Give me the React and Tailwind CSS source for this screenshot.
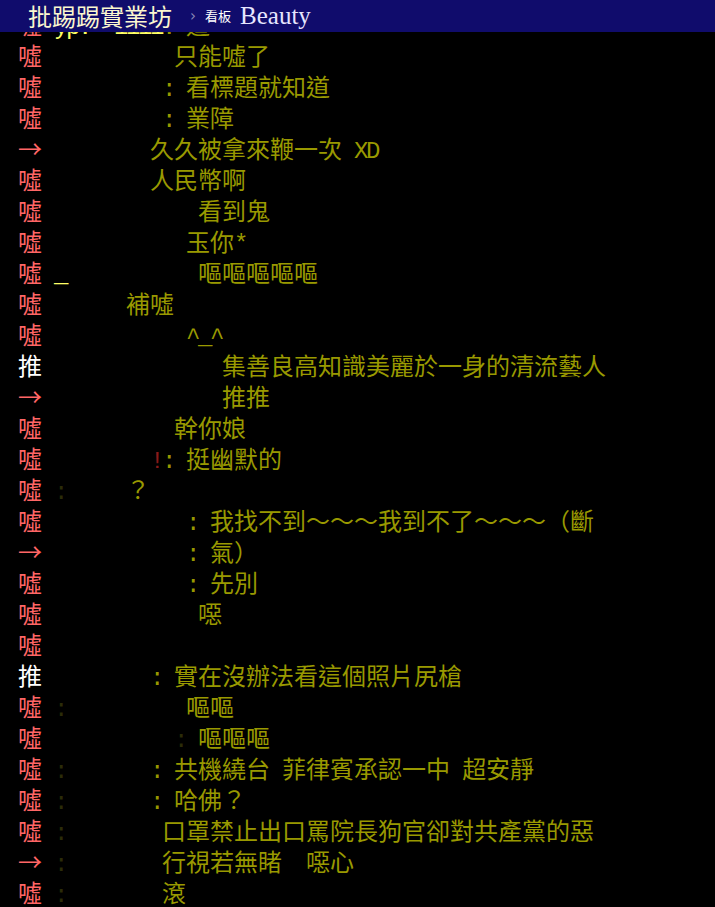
import React from "react";

const TAGS = {
  boo: { ch: "噓", cls: "text-[#ff6666]" },
  arrow: { ch: "→", cls: "text-[#ff6666]" },
  push: { ch: "推", cls: "text-white" },
};

const Y = "text-[#999900]";
const HI = "text-[#ffff66]";
const DIM = "text-[#2c2c08]";
const RED = "text-[#8a1a1a]";

const rows = [
  { tag: "boo", segs: [[4, "yp.", HI], [9, "1111", HI], [13, ":", Y], [15, "這", Y]] },
  { tag: "boo", segs: [[14, "只能噓了", Y]] },
  { tag: "boo", segs: [[13, ": 看標題就知道", Y]] },
  { tag: "boo", segs: [[13, ": 業障", Y]] },
  { tag: "arrow", segs: [[12, "久久被拿來鞭一次 XD", Y]] },
  { tag: "boo", segs: [[12, "人民幣啊", Y]] },
  { tag: "boo", segs: [[16, "看到鬼", Y]] },
  { tag: "boo", segs: [[15, "玉你*", Y]] },
  { tag: "boo", segs: [[4, "_", HI], [16, "嘔嘔嘔嘔嘔", Y]] },
  { tag: "boo", segs: [[10, "補噓", Y]] },
  { tag: "boo", segs: [[15, "^_^", Y]] },
  { tag: "push", segs: [[18, "集善良高知識美麗於一身的清流藝人", Y]] },
  { tag: "arrow", segs: [[18, "推推", Y]] },
  { tag: "boo", segs: [[14, "幹你娘", Y]] },
  { tag: "boo", segs: [[12, "!", RED], [13, ": 挺幽默的", Y]] },
  { tag: "boo", segs: [[4, ":", DIM], [10, "？", Y]] },
  { tag: "boo", segs: [[15, ": 我找不到～～～我到不了～～～（斷", Y]] },
  { tag: "arrow", segs: [[15, ": 氣）", Y]] },
  { tag: "boo", segs: [[15, ": 先別", Y]] },
  { tag: "boo", segs: [[16, "噁", Y]] },
  { tag: "boo", segs: [] },
  { tag: "push", segs: [[12, ": 實在沒辦法看這個照片尻槍", Y]] },
  { tag: "boo", segs: [[4, ":", DIM], [15, "嘔嘔", Y]] },
  { tag: "boo", segs: [[14, ":", DIM], [16, "嘔嘔嘔", Y]] },
  { tag: "boo", segs: [[4, ":", DIM], [12, ": 共機繞台 菲律賓承認一中 超安靜", Y]] },
  { tag: "boo", segs: [[4, ":", DIM], [12, ": 哈佛？", Y]] },
  { tag: "boo", segs: [[4, ":", DIM], [13, "口罩禁止出口罵院長狗官卻對共產黨的惡", Y]] },
  { tag: "arrow", segs: [[4, ":", DIM], [13, "行視若無睹　噁心", Y]] },
  { tag: "boo", segs: [[4, ":", DIM], [13, "滾", Y]] },
];

const isAscii = (c) => c.charCodeAt(0) < 128;
const colsOf = (s) => [...s].reduce((n, c) => n + (isAscii(c) ? 1 : 2), 0);

function Runs({ text }) {
  const runs = [];
  for (const c of text) {
    const a = isAscii(c);
    if (runs.length && runs[runs.length - 1].a === a) runs[runs.length - 1].t += c;
    else runs.push({ a, t: c });
  }
  return runs.map((r, i) =>
    r.a ? (
      <span key={i} className="font-['Liberation_Mono',monospace] text-[24px] tracking-[-2.4px]">
        {r.t}
      </span>
    ) : (
      <span key={i} className="font-['Noto_Sans_CJK_TC',sans-serif] text-[24px]">
        {r.t}
      </span>
    )
  );
}

function Row({ row }) {
  const tag = TAGS[row.tag];
  let col = 3;
  const parts = [];
  row.segs.forEach(([c, text, cls], i) => {
    const pad = c > col ? " ".repeat(c - col) : "";
    if (pad) parts.push(<Runs key={"p" + i} text={pad} />);
    parts.push(
      <span key={"s" + i} className={cls}>
        <Runs text={text} />
      </span>
    );
    col = c + colsOf(text);
  });
  return (
    <div className="h-[31px] pl-[6px] leading-[31px] whitespace-pre overflow-hidden">
      <Runs text=" " />
      <span className={tag.cls}>
        <Runs text={tag.ch} />
      </span>
      {parts}
    </div>
  );
}

export default function App() {
  return (
    <div className="h-[907px] w-full overflow-hidden bg-black">
      <div className="sticky top-0 z-10 flex h-[32px] items-center bg-[#100c6c] pl-[28px]">
        <span className="font-['Noto_Sans_CJK_TC',sans-serif] text-[24px] leading-[32px] text-[#fbf7cf]">
          批踢踢實業坊
        </span>
        <span className="ml-[18px] font-['DejaVu_Sans',sans-serif] text-[15px] text-[#8a8ab8]">›</span>
        <span className="ml-[9px] font-['Noto_Sans_CJK_TC',sans-serif] text-[13px] text-white">看板</span>
        <span className="ml-[9px] font-['Liberation_Serif',serif] text-[25px] leading-[32px] text-[#e6e6ff]">
          Beauty
        </span>
      </div>
      <div className="mt-[-24px]">
        {rows.map((r, i) => (
          <Row key={i} row={r} />
        ))}
      </div>
    </div>
  );
}
